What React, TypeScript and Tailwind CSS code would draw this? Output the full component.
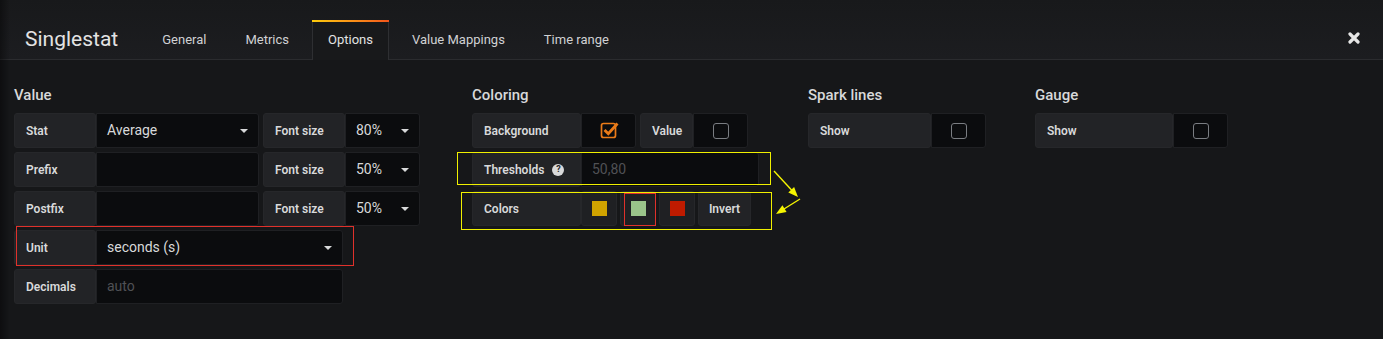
import React from "react";

const font = { fontFamily: "Roboto, 'Liberation Sans', sans-serif" };

function Caret() {
  return <span className="ml-auto h-0 w-0 border-x-[4px] border-t-[4px] border-x-transparent border-t-[#d8d9da]" />;
}

function Label({ w, children }: { w: string; children: React.ReactNode }) {
  return (
    <div className={`${w} flex h-full shrink-0 items-center rounded-[3px] border border-[#26272a] bg-[#222326] pl-[11px] text-[12px] font-semibold text-[#d8d9da]`}>
      {children}
    </div>
  );
}

function Input({ w, children, caret, dim }: { w: string; children?: React.ReactNode; caret?: boolean; dim?: boolean }) {
  return (
    <div className={`${w} flex h-full shrink-0 items-center rounded-r-[3px] border border-[#1f2023] bg-[#0b0c0e] px-[10px] text-[14px] ${dim ? "text-[#505155]" : "text-[#d8d9da]"}`}>
      <span>{children}</span>
      {caret && <Caret />}
    </div>
  );
}

function Check({ on }: { on?: boolean }) {
  return (
    <div className="flex h-full w-[55px] shrink-0 items-center justify-center rounded-r-[3px] border border-[#1f2023] bg-[#0b0c0e]">
      {on ? (
        <svg width="20" height="20" viewBox="0 0 20 20" className="ml-[3px] mb-[1px]">
          <rect x="1.5" y="3.5" width="14" height="14" rx="2" fill="none" stroke="#eb7b18" strokeWidth="1.7" />
          <path d="M4.5 10 L8.3 13.8 L17.5 3.5" fill="none" stroke="#eb7b18" strokeWidth="2.8" />
        </svg>
      ) : (
        <div className="h-[16px] w-[16px] rounded-[3px] border-[1.5px] border-[#7a7d82]" />
      )}
    </div>
  );
}

function Swatch({ color }: { color: string }) {
  return (
    <div className="flex h-full w-[36px] shrink-0 items-center justify-center rounded-[3px] border border-[#26272a] bg-[#1f2023]">
      <div className={`h-[15px] w-[15px] ${color}`} />
    </div>
  );
}

function Heading({ children }: { children: React.ReactNode }) {
  return <div className="mb-[7px] h-[22px] text-[15px] leading-[22px] font-medium text-[#d8d9da]">{children}</div>;
}

const Row = ({ children, className = "" }: { children: React.ReactNode; className?: string }) => (
  <div className={`relative flex h-[35px] ${className}`}>{children}</div>
);

export default function App() {
  const tabs = ["General", "Metrics", "Options", "Value Mappings", "Time range"];
  return (
    <div className="relative h-[339px] w-[1383px] overflow-hidden bg-[#161719]" style={font}>
      {/* left shadow */}
      <div className="pointer-events-none absolute inset-y-0 left-0 w-[10px] bg-gradient-to-r from-black/40 to-transparent" />

      {/* header */}
      <div className="flex h-[60px] items-end border-b border-[#2b2c2f] bg-gradient-to-b from-[#18191b] to-[#1c1d20]">
        <div className="ml-[25px] flex h-[39px] items-center text-[21px] text-[#e3e3e3]">Singlestat</div>
        <div className="ml-[28px] flex gap-[7px]">
          {tabs.map(t =>
            t === "Options" ? (
              <div key={t} className="relative -mb-px flex h-[40px] items-center border-x border-[#2e2f32] bg-[#18191b] px-[15px] text-[13px] text-[#e3e3e3]">
                <div className="absolute inset-x-[-1px] top-0 h-[2px] bg-gradient-to-r from-[#fbca0a] to-[#f2541b]" />
                {t}
              </div>
            ) : (
              <div key={t} className="flex h-[39px] items-center px-[16px] text-[13px] text-[#d0d1d3]">{t}</div>
            )
          )}
        </div>
        <div className="ml-auto mr-[23px] flex h-[39px] items-center pb-[3px]">
          <svg width="12" height="12" viewBox="0 0 12 12">
            <path d="M2 2 L10 10 M10 2 L2 10" stroke="#e6e6e6" strokeWidth="3.2" strokeLinecap="round" />
          </svg>
        </div>
      </div>

      {/* body */}
      <div className="relative flex pl-[14px] pt-[24px]">
        {/* Value */}
        <div className="w-[458px] shrink-0">
          <Heading>Value</Heading>
          <div className="flex flex-col gap-[4px]">
            <Row>
              <Label w="w-[82px]">Stat</Label>
              <Input w="w-[163px]" caret>Average</Input>
              <div className="ml-[4px] flex h-full">
                <Label w="w-[82px]">Font size</Label>
                <Input w="w-[75px]" caret>80%</Input>
              </div>
            </Row>
            <Row>
              <Label w="w-[82px]">Prefix</Label>
              <Input w="w-[163px]" />
              <div className="ml-[4px] flex h-full">
                <Label w="w-[82px]">Font size</Label>
                <Input w="w-[75px]" caret>50%</Input>
              </div>
            </Row>
            <Row>
              <Label w="w-[82px]">Postfix</Label>
              <Input w="w-[163px]" />
              <div className="ml-[4px] flex h-full">
                <Label w="w-[82px]">Font size</Label>
                <Input w="w-[75px]" caret>50%</Input>
              </div>
            </Row>
            <Row>
              <Label w="w-[82px]">Unit</Label>
              <Input w="w-[247px]" caret>seconds (s)</Input>
              <div className="absolute left-[2px] top-[-4px] h-[40px] w-[338px] ring-1 ring-inset ring-[#e0312b]" />
            </Row>
            <Row>
              <Label w="w-[82px]">Decimals</Label>
              <Input w="w-[247px]" dim>auto</Input>
            </Row>
          </div>
        </div>

        {/* Coloring */}
        <div className="w-[336px] shrink-0">
          <Heading>Coloring</Heading>
          <div className="flex flex-col gap-[4px]">
            <Row>
              <Label w="w-[109px]">Background</Label>
              <Check on />
              <div className="ml-[4px] flex h-full">
                <Label w="w-[53px]">Value</Label>
                <Check />
              </div>
            </Row>
            <Row>
              <Label w="w-[109px]">
                Thresholds
                <span className="ml-[8px] flex h-[12px] w-[12px] items-center justify-center rounded-full bg-[#d8d9da] text-[9px] font-bold leading-none text-[#222326]">?</span>
              </Label>
              <Input w="w-[178px]" dim>50,80</Input>
              <div className="absolute left-[-15px] top-0 h-[33px] w-[314px] ring-1 ring-inset ring-[#f0f000]" />
            </Row>
            <Row>
              <Label w="w-[109px]">Colors</Label>
              <div className="flex h-full gap-[3px]">
                <Swatch color="bg-[#d0a300]" />
                <div className="relative flex h-full">
                  <Swatch color="bg-[#9ac48a]" />
                  <div className="absolute left-[4px] top-[2px] h-[33px] w-[32px] ring-1 ring-inset ring-[#e0312b]" />
                </div>
                <Swatch color="bg-[#bf1b00]" />
                <div className="flex h-full w-[53px] items-center justify-center rounded-[3px] border border-[#26272a] bg-[#222326] text-[12px] font-semibold text-[#d8d9da]">Invert</div>
              </div>
              <div className="absolute left-[-11px] top-[1px] h-[38px] w-[311px] ring-1 ring-inset ring-[#f0f000]" />
            </Row>
          </div>
        </div>

        {/* Spark lines */}
        <div className="w-[227px] shrink-0">
          <Heading>Spark lines</Heading>
          <Row>
            <Label w="w-[123px]">Show</Label>
            <Check />
          </Row>
        </div>

        {/* Gauge */}
        <div className="shrink-0">
          <Heading>Gauge</Heading>
          <Row>
            <Label w="w-[138px]">Show</Label>
            <Check />
          </Row>
        </div>
      </div>

      {/* annotation arrows */}
      <svg className="absolute left-[765px] top-[165px]" width="45" height="55" viewBox="0 0 45 55">
        <path d="M9 6 L27 25.5" stroke="#f5f500" strokeWidth="1.4" />
        <path d="M33 32 L23.3 27.4 L29.1 22 Z" fill="#f5f500" />
        <path d="M35 34 L19 44" stroke="#f5f500" strokeWidth="1.4" />
        <path d="M11 49 L17.4 40.3 L21.6 47.1 Z" fill="#f5f500" />
      </svg>
    </div>
  );
}
